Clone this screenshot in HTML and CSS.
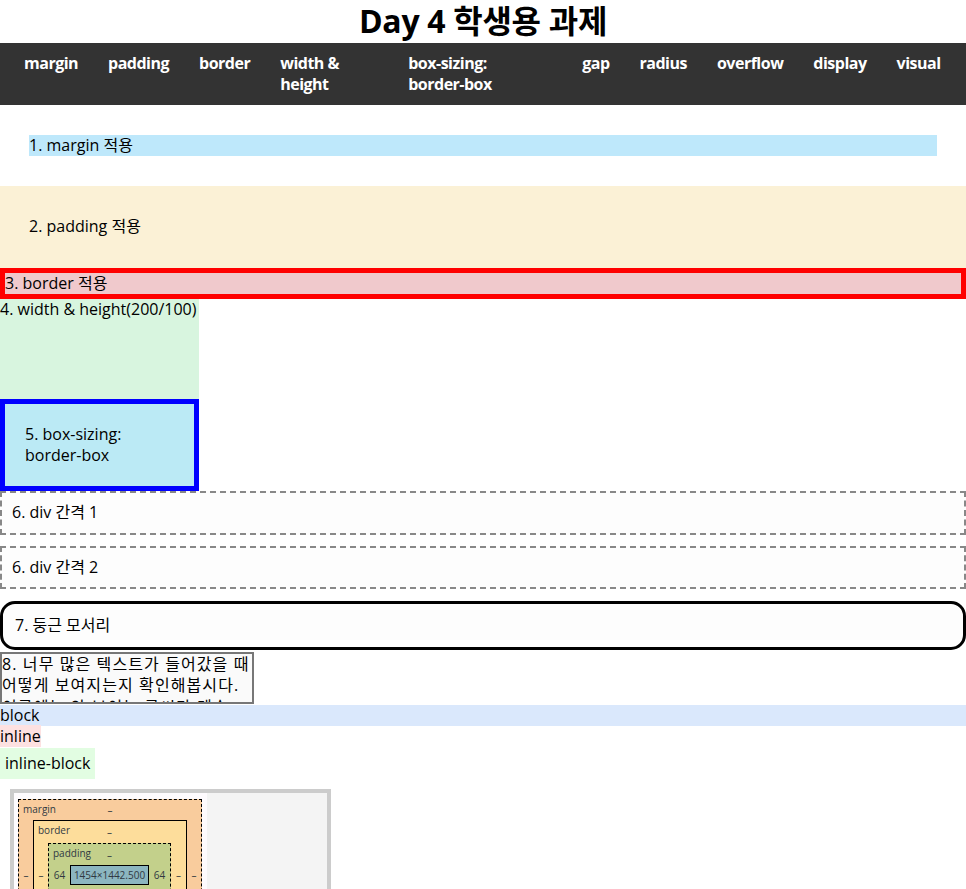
FILE: index.html
```html
<!DOCTYPE html>
<html lang="ko">
<head>
<meta charset="utf-8">
<title>Day 4 학생용 과제</title>
<link rel="stylesheet" href="styles.css">
</head>
<body>
<h1 class="title">Day 4 학생용 과제</h1>
<nav class="nav">
  <a class="nav-item" href="#margin">margin</a>
  <a class="nav-item" href="#padding">padding</a>
  <a class="nav-item" href="#border">border</a>
  <a class="nav-item nav-wide1" href="#size">width &amp; height</a>
  <a class="nav-item nav-wide2" href="#boxsizing">box-sizing: <span class="nowrap">border-box</span></a>
  <a class="nav-item" href="#gap">gap</a>
  <a class="nav-item" href="#radius">radius</a>
  <a class="nav-item" href="#overflow">overflow</a>
  <a class="nav-item" href="#display">display</a>
  <a class="nav-item" href="#visual">visual</a>
</nav>

<div class="sec-margin" id="margin">1. margin 적용</div>
<div class="sec-padding" id="padding">2. padding 적용</div>
<div class="sec-border" id="border">3. border 적용</div>
<div class="sec-size" id="size">4. width &amp; height(200/100)</div>
<div class="sec-boxsizing" id="boxsizing">5. box-sizing: <span class="nowrap">border-box</span></div>
<div class="sec-gap" id="gap">6. div 간격 1</div>
<div class="sec-gap">6. div 간격 2</div>
<div class="sec-radius" id="radius">7. 둥근 모서리</div>
<div class="sec-overflow" id="overflow">8. 너무 많은 텍스트가 들어갔을 때 어떻게 보여지는지 확인해봅시다. 이곳에는 안 보이는 글씨가 계속 이어집니다. 넘치는 내용은 잘려서 보이지 않습니다.</div>

<div id="display">
  <div class="disp-block">block</div>
  <div><span class="disp-inline">inline</span></div>
  <div><span class="disp-inline-block">inline-block</span></div>
</div>

<div class="bm-wrap" id="visual">
  <div class="bm-panel">
    <div class="bm-box bm-margin">
      <span class="bm-label">margin</span>
      <span class="bm-v bm-top">–</span>
      <span class="bm-v bm-left">–</span>
      <div class="bm-box bm-border bm-inner">
        <span class="bm-label">border</span>
        <span class="bm-v bm-top">–</span>
        <span class="bm-v bm-left">–</span>
        <div class="bm-box bm-padding bm-inner">
          <span class="bm-label">padding</span>
          <span class="bm-v bm-top">–</span>
          <span class="bm-v bm-left">64</span>
          <div class="bm-content bm-inner">1454×1442.500</div>
          <span class="bm-v bm-right">64</span>
          <span class="bm-v bm-bottom">–</span>
        </div>
        <span class="bm-v bm-right">–</span>
        <span class="bm-v bm-bottom">–</span>
      </div>
      <span class="bm-v bm-right">–</span>
      <span class="bm-v bm-bottom">–</span>
    </div>
  </div>
</div>
</body>
</html>
```

FILE: styles.css
```css
html, body {
  background: #ffffff;
}

body {
  margin: 0;
  font-family: "Open Sans", "Noto Sans CJK KR", sans-serif;
  font-size: 16px;
  line-height: 1.33;
  color: #000000;
}

.nowrap {
  white-space: nowrap;
}

.title {
  margin: 0;
  font-size: 32px;
  font-weight: 700;
  line-height: 1.33;
  letter-spacing: -0.3px;
  text-align: center;
}

.nav {
  display: flex;
  gap: 30px;
  padding: 10px 24px;
  background: #333333;
}

.nav-item {
  flex: none;
  color: #ffffff;
  font-weight: 700;
  letter-spacing: -0.5px;
  text-decoration: none;
}

.nav-wide1 {
  width: 98px;
}

.nav-wide2 {
  width: 144px;
}

.sec-margin {
  margin: 30px 29px;
  background: #bee8fb;
}

.sec-padding {
  padding: 30px 29px;
  background: #fbf1d6;
}

.sec-border {
  border: 5px solid #ff0000;
  background: #f0c9cc;
}

.sec-size {
  width: 199px;
  height: 100px;
  background: #d8f5df;
}

.sec-boxsizing {
  box-sizing: border-box;
  width: 199px;
  padding: 20px;
  border: 5px solid #0000ff;
  background: #bbeaf5;
}

.sec-gap {
  border: 2px dashed #888888;
  padding: 9px 10px;
  margin-bottom: 11.5px;
  background: #fdfdfd;
}

.sec-radius {
  border: 3px solid #000000;
  border-radius: 15px;
  padding: 11px 12px;
  margin-bottom: 2px;
  background: #fdfdfd;
}

.sec-overflow {
  width: 250px;
  height: 48px;
  overflow: hidden;
  border: 2px solid #777777;
  margin-bottom: 1px;
  background: #fafafa;
  word-break: keep-all;
  letter-spacing: 1.1px;
}

.disp-block {
  background: #dae8fc;
}

.disp-inline {
  background: #fde1e1;
}

.disp-inline-block {
  display: inline-block;
  padding: 5px;
  background: #e2fde2;
}

/* box model diagram */
.bm-wrap {
  display: flex;
  width: 313px;
  margin: 10px 0 0 10px;
  border: 4px solid #cccccc;
  background: #f4f4f4;
}

.bm-panel {
  padding: 6px 5px 5px 4px;
  background: #fefbfe;
}

.bm-box {
  position: relative;
  display: grid;
  font-family: "Open Sans", sans-serif;
  font-size: 10px;
  line-height: 14px;
  color: #303942;
}

.bm-margin {
  grid-template-columns: 14px auto 14px;
  grid-template-rows: 20px auto 20px;
  border: 1px dashed #000000;
  background: #f9cc9d;
}

.bm-border {
  grid-template-columns: 14px auto 15px;
  grid-template-rows: 22px auto 22px;
  border: 1px solid #000000;
  background: #fddd9b;
}

.bm-padding {
  grid-template-columns: 21px auto 21px;
  grid-template-rows: 21px auto 21px;
  border: 1px dashed #000000;
  background: #c3d08b;
}

.bm-inner {
  grid-column: 2;
  grid-row: 2;
}

.bm-content {
  display: flex;
  align-items: center;
  justify-content: center;
  width: 77px;
  height: 18px;
  border: 1px solid #000000;
  background: #8cb6c0;
  font-family: "Open Sans", sans-serif;
  font-size: 10px;
  color: #303942;
}

.bm-label {
  position: absolute;
  top: 2px;
  left: 4px;
}

.bm-v {
  display: flex;
  align-items: center;
  justify-content: center;
}

.bm-top {
  grid-column: 2;
  grid-row: 1;
}

.bm-left {
  grid-column: 1;
  grid-row: 2;
}

.bm-right {
  grid-column: 3;
  grid-row: 2;
}

.bm-bottom {
  grid-column: 2;
  grid-row: 3;
}
```
